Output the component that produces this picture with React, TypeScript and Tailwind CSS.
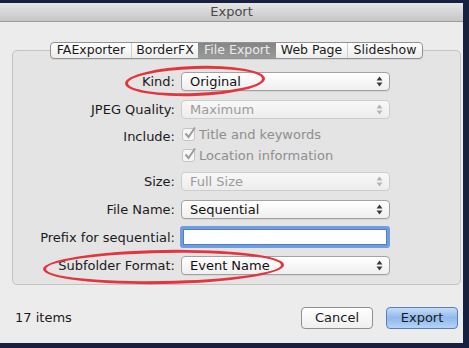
import React from 'react';

const font = { fontFamily: '"DejaVu Sans", "Liberation Sans", sans-serif' };

function Arrows({ disabled }: { disabled?: boolean }) {
  const c = disabled ? '#b4b4b4' : '#3a3a3a';
  return (
    <svg width="7" height="11" viewBox="0 0 7 11" className="shrink-0">
      <path d="M3.5 0.5 L6.5 4.5 L0.5 4.5 Z" fill={c} />
      <path d="M3.5 10.5 L6.5 6.5 L0.5 6.5 Z" fill={c} />
    </svg>
  );
}

function Popup({ value, disabled }: { value: string; disabled?: boolean }) {
  return (
    <div
      className={`flex h-[19px] w-[209px] items-center justify-between rounded-[4px] border pl-[8px] pr-[6px] ${
        disabled
          ? 'border-[#cdcdcd] bg-gradient-to-b from-[#f8f8f8] to-[#ededed] text-[#9b9b9b]'
          : 'border-[#a2a2a2] bg-gradient-to-b from-[#ffffff] to-[#efefef] text-[#111] shadow-[0_1px_0_rgba(0,0,0,0.06)]'
      }`}
    >
      <span className="text-[13px] leading-none">{value}</span>
      <Arrows disabled={disabled} />
    </div>
  );
}

function Check({ label }: { label: string }) {
  return (
    <div className="flex items-center gap-[4px]">
      <div className="relative h-[13px] w-[13px] rounded-[3px] border border-[#c4c4c4] bg-[#f7f7f7]">
        <svg width="14" height="14" viewBox="0 0 14 14" className="absolute -top-[3px] left-[0px]">
          <path d="M2.5 7.5 L5.5 11 L12 1.5" fill="none" stroke="#9d9d9d" strokeWidth="2" />
        </svg>
      </div>
      <span className="text-[13px] leading-none text-[#8e8e8e]">{label}</span>
    </div>
  );
}

function Row({ label, children, className = '' }: { label: string; children: React.ReactNode; className?: string }) {
  return (
    <div className={`flex items-center ${className}`}>
      <div className="w-[162px] whitespace-nowrap text-right text-[13px] leading-none text-[#1a1a1a]">{label}</div>
      <div className="ml-[6px]">{children}</div>
    </div>
  );
}

const tabs = ['FAExporter', 'BorderFX', 'File Export', 'Web Page', 'Slideshow'];
const tabW = [80, 67, 78, 71, 75];

export default function App() {
  return (
    <div style={font} className="relative h-[348px] w-[469px] overflow-hidden bg-[#17213f] pt-[3px] pr-[6px] pb-[5px]">
      <div className="flex h-full flex-col bg-[#ececec]">
        {/* title bar */}
        <div className="flex h-[19px] items-center justify-center border-b border-[#9c9c9c] bg-gradient-to-b from-[#e6e6e6] to-[#c6c6c6] text-[13px] text-[#4a4a4a]">
          Export
        </div>

        {/* tab box */}
        <div className="relative ml-[12px] mr-[2px] mt-[28px] h-[235px] rounded-[5px] border border-[#c3c3c3] bg-[#e4e4e4]">
          <div className="absolute -top-[9px] left-0 right-0 flex justify-center">
            <div className="flex h-[17px] overflow-hidden rounded-[4px] border border-[#929292] bg-gradient-to-b from-[#ffffff] to-[#ececec] shadow-[0_1px_0_rgba(0,0,0,0.08)]">
              {tabs.map((t, i) => (
                <div
                  key={t}
                  style={{ width: tabW[i] }}
                  className={`flex items-center justify-center whitespace-nowrap text-[12.5px] leading-none ${
                    t === 'File Export'
                      ? 'bg-gradient-to-b from-[#858585] to-[#9a9a9a] text-[#ececec]'
                      : 'text-[#1a1a1a]'
                  } ${i > 0 && t !== 'File Export' && tabs[i - 1] !== 'File Export' ? 'border-l border-[#cfcfcf]' : ''}`}
                >
                  {t}
                </div>
              ))}
            </div>
          </div>

          <div className="flex flex-col pt-[21px]">
            <Row label="Kind:">
              <Popup value="Original" />
            </Row>
            <Row label="JPEG Quality:" className="mt-[9px]">
              <Popup value="Maximum" disabled />
            </Row>
            <div className="mt-[8px] flex">
              <div className="w-[162px] pt-[3px] text-right text-[13px] leading-none text-[#1a1a1a]">Include:</div>
              <div className="ml-[7px] flex flex-col gap-[8px] pt-[1px]">
                <Check label="Title and keywords" />
                <Check label="Location information" />
              </div>
            </div>
            <Row label="Size:" className="mt-[10px]">
              <Popup value="Full Size" disabled />
            </Row>
            <Row label="File Name:" className="mt-[9px]">
              <Popup value="Sequential" />
            </Row>
            <Row label="Prefix for sequential:" className="mt-[7px]">
              <div className="-ml-[1px] h-[22px] w-[210px] rounded-[3px] border-[3px] border-[#6f9de0] bg-white shadow-[inset_0_0_0_1px_#4d7fcf]" />
            </Row>
            <Row label="Subfolder Format:" className="mt-[8px]">
              <Popup value="Event Name" />
            </Row>
          </div>
        </div>

        {/* footer */}
        <div className="mt-[22px] flex items-center px-[15px] pr-[5px]">
          <span className="text-[13px] text-[#1a1a1a]">17 items</span>
          <div className="ml-auto flex gap-[13px]">
            <button className="h-[22px] w-[72px] rounded-[4px] border border-[#8f8f8f] bg-gradient-to-b from-[#ffffff] to-[#efefef] text-[13px] text-[#1a1a1a]">
              Cancel
            </button>
            <button className="h-[22px] w-[72px] rounded-[4px] border border-[#5a7fb5] bg-gradient-to-b from-[#c6dcf6] via-[#8fb8ec] to-[#b5d3f6] text-[13px] text-[#1a1a1a]">
              Export
            </button>
          </div>
        </div>
      </div>

      {/* red annotation ellipses */}
      <div className="pointer-events-none absolute left-[125px] top-[66px] h-[30px] w-[140px] -rotate-[2deg] rounded-[50%] border-[3px] border-[#e2353d]" />
      <div className="pointer-events-none absolute left-[43px] top-[250px] h-[34px] w-[241px] -rotate-[1deg] rounded-[50%] border-[3px] border-[#e2353d]" />
    </div>
  );
}
